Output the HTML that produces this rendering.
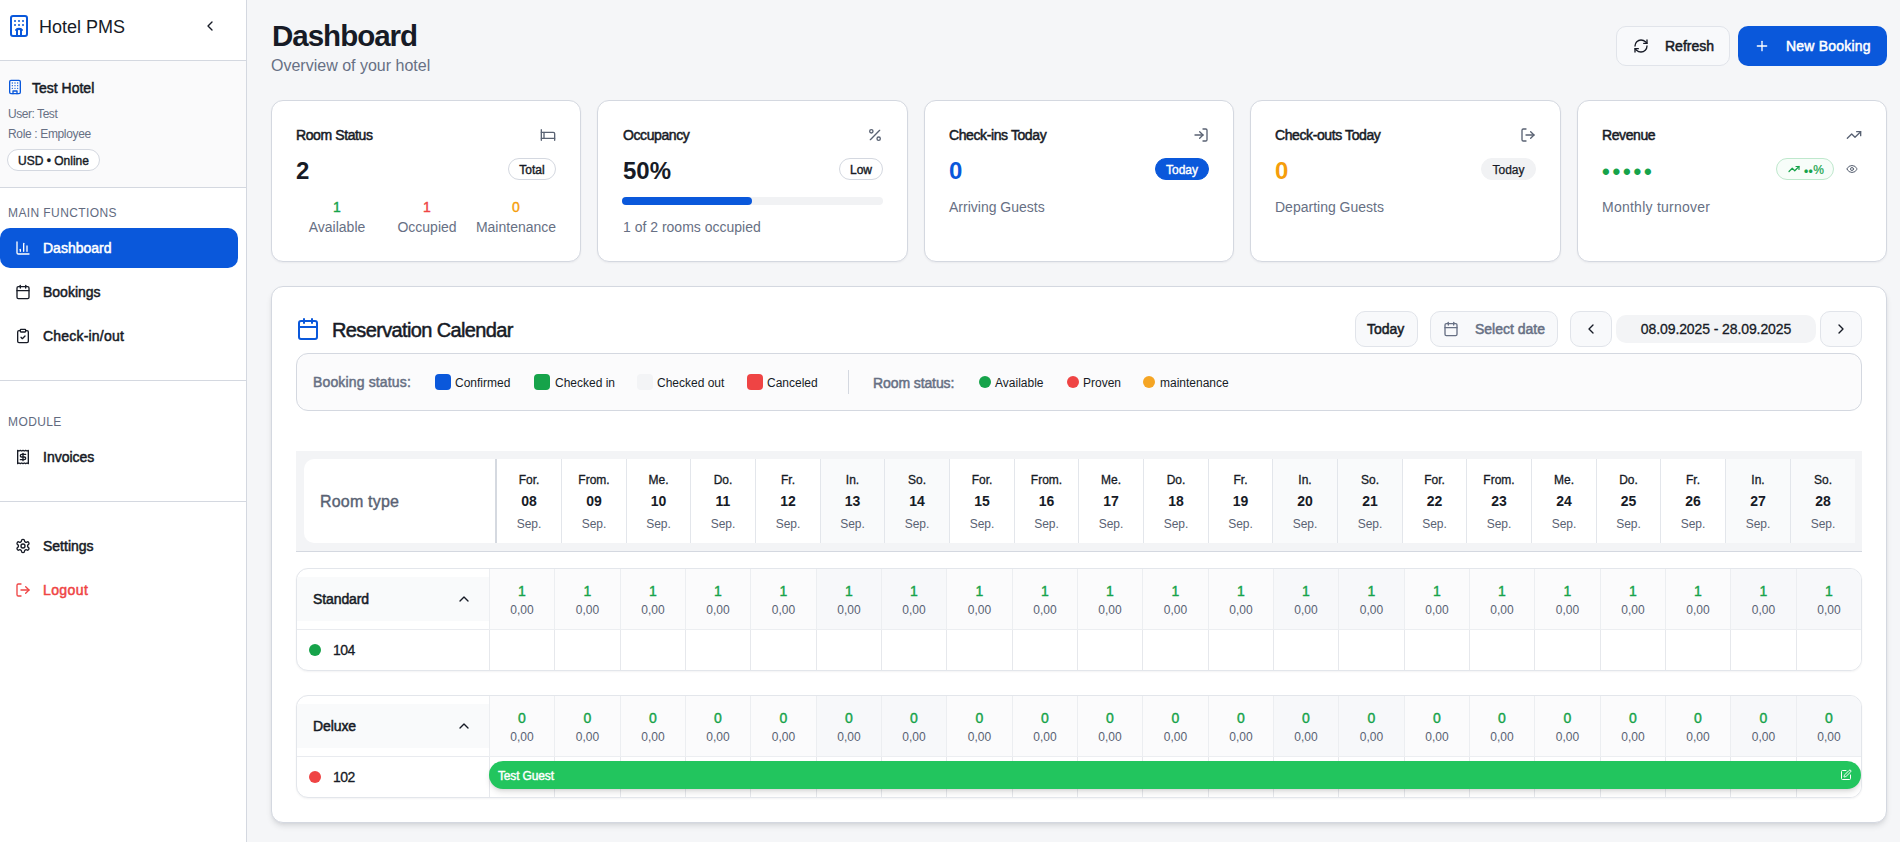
<!DOCTYPE html>
<html lang="en">
<head>
<meta charset="utf-8">
<title>Hotel PMS - Dashboard</title>
<style>
*{box-sizing:border-box;margin:0;padding:0}
html,body{width:1900px;height:842px;overflow:hidden}
body{font-family:"Liberation Sans",sans-serif;background:#f5f6f8;color:#171b26;position:relative;font-size:14px;line-height:1}
svg{display:block}
.abs{position:absolute}
.t{position:absolute;white-space:nowrap;line-height:1}
.ic{position:absolute;fill:none;stroke:currentColor;stroke-width:2;stroke-linecap:round;stroke-linejoin:round}
/* sidebar */
#sidebar{position:absolute;left:0;top:0;width:247px;height:842px;background:#fff;border-right:1px solid #d4d8e0}
#sb-head{position:absolute;left:0;top:0;width:246px;height:61px;border-bottom:1px solid #d4d8e0}
#sb-hotel{position:absolute;left:0;top:61px;width:246px;height:127px;background:#fafafb;border-bottom:1px solid #d4d8e0}
.sb-sep{position:absolute;left:0;width:246px;height:1px;background:#d4d8e0}
.sb-label{position:absolute;left:8px;font-size:12px;letter-spacing:.4px;color:#626b7f;white-space:nowrap}
.nav{position:absolute;left:0;width:238px;height:40px;border-radius:10px;color:#171b26}
.nav.active{background:#0a58db;color:#fff}
.nav .ic{left:15px;top:12px;width:16px;height:16px}
.nav span{position:absolute;left:43px;top:13px;font-size:14px;font-weight:400;-webkit-text-stroke:.5px currentColor;white-space:nowrap}
/* main */
.btn{position:absolute;height:40px;border-radius:10px;font-size:14px;font-weight:700}
.card{position:absolute;top:100px;height:162px;background:#fff;border:1px solid #d4d8e0;border-radius:12px;box-shadow:0 1px 2px rgba(16,24,40,.05)}
.card h3{position:absolute;left:24px;top:27px;font-size:14px;font-weight:400;-webkit-text-stroke:.5px currentColor;white-space:nowrap;letter-spacing:-.4px}
.card .big{position:absolute;left:24px;top:58px;font-size:24px;font-weight:700;white-space:nowrap}
.card .sub{position:absolute;left:24px;top:99px;font-size:14px;color:#677084;white-space:nowrap}
.card .ic{right:24px;top:26px;width:16px;height:16px;color:#596273}
.pill{position:absolute;height:22px;border-radius:11px;font-size:12px;font-weight:400;-webkit-text-stroke:.4px currentColor;line-height:20px;padding-top:1px;text-align:center;border:1px solid #d4d8e0;white-space:nowrap}
.muted{color:#677084}

/* calendar */
.sbw{font-weight:400;-webkit-text-stroke:.5px currentColor}
#cal{position:absolute;left:271px;top:286px;width:1616px;height:537px;background:#fff;border:1px solid #d4d8e0;border-radius:12px;box-shadow:0 4px 6px -1px rgba(16,24,40,.11),0 2px 4px -2px rgba(16,24,40,.10)}
.cbtn{position:absolute;top:311px;height:36px;border:1px solid #e1e4ea;border-radius:10px;background:#f8f9fb;font-size:14px}
#legend{position:absolute;left:296px;top:353px;width:1566px;height:58px;border:1px solid #d4d8e0;border-radius:12px;background:#fbfbfc}
.sw{position:absolute;top:374px;width:16px;height:16px;border-radius:4px}
.dot{position:absolute;width:12px;height:12px;border-radius:50%}
.lg{position:absolute;top:377px;font-size:12px;white-space:nowrap;color:#171b26}
#hstrip{position:absolute;left:296px;top:451px;width:1566px;height:101px;background:#f3f4f6;border-bottom:1px solid #d4d8e0}
.hc{position:absolute;top:459px;height:84px;background:#fff;border-right:1px solid #e3e6eb;text-align:center}
.hc.we{background:#f9fafb}
.hc b{position:absolute;left:0;right:0;white-space:nowrap}
.hc .d1{top:15px;font-size:12px;font-weight:400;-webkit-text-stroke:.3px currentColor}
.hc .d2{top:35px;font-size:14px;font-weight:700}
.hc .d3{top:59px;font-size:12px;font-weight:400;color:#596273}
.grp{position:absolute;left:296px;width:1566px;height:103px;border:1px solid #e3e6eb;border-radius:12px;background:#fff;overflow:hidden;box-shadow:0 1px 2px rgba(16,24,40,.05)}
.grp .lab{position:absolute;left:0;top:8px;width:192px;height:44px;background:#f9fafb}
.gc{position:absolute;top:0;height:61px;background:#fbfbfc;border-left:1px solid #eceef1;border-bottom:1px solid #eceef1;text-align:center}
.gc.we{background:#f7f8fa}
.gc b{position:absolute;left:0;right:0;top:15px;font-size:14px;font-weight:400;-webkit-text-stroke:.4px #16a34a;color:#16a34a}
.gc i{position:absolute;left:0;right:0;top:35px;font-size:12px;font-style:normal;color:#596273}
.rc{position:absolute;top:61px;height:40px;border-left:1px solid #e6e8ec;background:#fff}
.rl{position:absolute;left:0;top:60px;width:192px;height:41px;border-top:1px solid #e9ebef}
</style>
</head>
<body>

<!-- ============ SIDEBAR ============ -->
<aside id="sidebar">
  <div id="sb-head">
    <svg class="ic" style="left:7px;top:14px;width:24px;height:24px;color:#0a58db" viewBox="0 0 24 24"><rect x="4" y="2" width="16" height="20" rx="2"/><path d="M10 22v-6.57"/><path d="M14 15.43V22"/><path d="M15 16a5 5 0 0 0-6 0"/><path d="M8 7h.01M12 7h.01M16 7h.01M8 11h.01M12 11h.01M16 11h.01"/></svg>
    <div class="t" style="left:39px;top:18px;font-size:18px;">Hotel PMS</div>
    <svg class="ic" style="left:202px;top:18px;width:16px;height:16px;color:#171b26" viewBox="0 0 24 24"><path d="m15 18-6-6 6-6"/></svg>
  </div>
  <div id="sb-hotel">
    <svg class="ic" style="left:7px;top:18px;width:16px;height:16px;color:#0a58db" viewBox="0 0 24 24"><rect x="4" y="2" width="16" height="20" rx="2"/><path d="M9 22v-4h6v4"/><path d="M8 6h.01M16 6h.01M12 6h.01M12 10h.01M12 14h.01M16 10h.01M16 14h.01M8 10h.01M8 14h.01"/></svg>
    <div class="t sbw" style="left:32px;top:20px;font-size:14px">Test Hotel</div>
    <div class="t muted" style="left:8px;top:47px;font-size:12px;letter-spacing:-.45px">User: Test</div>
    <div class="t muted" style="left:8px;top:67px;font-size:12px;letter-spacing:-.35px">Role : Employee</div>
    <div class="pill" style="left:7px;top:88px;width:93px;color:#171b26;background:#fff">USD • Online</div>
  </div>

  <div class="sb-label" style="top:207px">MAIN FUNCTIONS</div>
  <div class="nav active" style="top:228px">
    <svg class="ic" viewBox="0 0 24 24"><path d="M3 3v16a2 2 0 0 0 2 2h16"/><path d="M18 17V9"/><path d="M13 17V5"/><path d="M8 17v-3"/></svg>
    <span>Dashboard</span>
  </div>
  <div class="nav" style="top:272px">
    <svg class="ic" viewBox="0 0 24 24"><path d="M8 2v4"/><path d="M16 2v4"/><rect width="18" height="18" x="3" y="4" rx="2"/><path d="M3 10h18"/></svg>
    <span>Bookings</span>
  </div>
  <div class="nav" style="top:316px">
    <svg class="ic" viewBox="0 0 24 24"><rect width="8" height="4" x="8" y="2" rx="1" ry="1"/><path d="M16 4h2a2 2 0 0 1 2 2v14a2 2 0 0 1-2 2H6a2 2 0 0 1-2-2V6a2 2 0 0 1 2-2h2"/><path d="m9 14 2 2 4-4"/></svg>
    <span style="letter-spacing:.2px">Check-in/out</span>
  </div>
  <div class="sb-sep" style="top:380px"></div>
  <div class="sb-label" style="top:416px">MODULE</div>
  <div class="nav" style="top:437px">
    <svg class="ic" viewBox="0 0 24 24"><path d="M4 2v20l2-1 2 1 2-1 2 1 2-1 2 1 2-1 2 1V2l-2 1-2-1-2 1-2-1-2 1-2-1-2 1Z"/><path d="M16 8h-6a2 2 0 1 0 0 4h4a2 2 0 1 1 0 4H8"/><path d="M12 17.5v-11"/></svg>
    <span>Invoices</span>
  </div>
  <div class="sb-sep" style="top:501px"></div>
  <div class="nav" style="top:526px">
    <svg class="ic" viewBox="0 0 24 24"><path d="M12.22 2h-.44a2 2 0 0 0-2 2v.18a2 2 0 0 1-1 1.73l-.43.25a2 2 0 0 1-2 0l-.15-.08a2 2 0 0 0-2.73.73l-.22.38a2 2 0 0 0 .73 2.73l.15.1a2 2 0 0 1 1 1.72v.51a2 2 0 0 1-1 1.74l-.15.09a2 2 0 0 0-.73 2.73l.22.38a2 2 0 0 0 2.73.73l.15-.08a2 2 0 0 1 2 0l.43.25a2 2 0 0 1 1 1.73V20a2 2 0 0 0 2 2h.44a2 2 0 0 0 2-2v-.18a2 2 0 0 1 1-1.73l.43-.25a2 2 0 0 1 2 0l.15.08a2 2 0 0 0 2.73-.73l.22-.39a2 2 0 0 0-.73-2.73l-.15-.08a2 2 0 0 1-1-1.74v-.5a2 2 0 0 1 1-1.74l.15-.09a2 2 0 0 0 .73-2.73l-.22-.38a2 2 0 0 0-2.73-.73l-.15.08a2 2 0 0 1-2 0l-.43-.25a2 2 0 0 1-1-1.73V4a2 2 0 0 0-2-2z"/><circle cx="12" cy="12" r="3"/></svg>
    <span>Settings</span>
  </div>
  <div class="nav" style="top:570px;color:#ef4444">
    <svg class="ic" viewBox="0 0 24 24"><path d="M9 21H5a2 2 0 0 1-2-2V5a2 2 0 0 1 2-2h4"/><path d="m16 17 5-5-5-5"/><path d="M21 12H9"/></svg>
    <span style="letter-spacing:.4px">Logout</span>
  </div>
</aside>

<!-- ============ MAIN ============ -->
<main id="main">
  <h1 class="t" style="left:272px;top:21px;font-size:29.5px;font-weight:700;letter-spacing:-1px">Dashboard</h1>
  <p class="t muted" style="left:271px;top:58px;font-size:16px">Overview of your hotel</p>

  <div class="btn" style="left:1616px;top:26px;width:114px;background:#f8f9fb;border:1px solid #e1e4ea;color:#171b26">
    <svg class="ic" style="left:16px;top:11px;width:16px;height:16px" viewBox="0 0 24 24"><path d="M3 12a9 9 0 0 1 9-9 9.75 9.75 0 0 1 6.74 2.74L21 8"/><path d="M21 3v5h-5"/><path d="M21 12a9 9 0 0 1-9 9 9.75 9.75 0 0 1-6.74-2.74L3 16"/><path d="M8 16H3v5"/></svg>
    <span class="t sbw" style="left:48px;top:12px">Refresh</span>
  </div>
  <div class="btn" style="left:1738px;top:26px;width:149px;background:#0a58db;color:#fff">
    <svg class="ic" style="left:16px;top:12px;width:16px;height:16px" viewBox="0 0 24 24"><path d="M5 12h14"/><path d="M12 5v14"/></svg>
    <span class="t sbw" style="left:48px;top:13px;letter-spacing:.2px">New Booking</span>
  </div>


  <section class="card" style="left:271px;width:310px">
    <h3>Room Status</h3>
    <svg class="ic" viewBox="0 0 24 24"><path d="M2 4v16"/><path d="M2 8h18a2 2 0 0 1 2 2v10"/><path d="M2 17h20"/><path d="M6 8v9"/></svg>
    <div class="big">2</div>
    <div class="pill" style="right:24px;top:57px;width:48px;color:#171b26">Total</div>
    <div class="t" style="left:25px;top:99px;width:80px;text-align:center;color:#16a34a;-webkit-text-stroke:.4px #16a34a">1</div>
    <div class="t muted" style="left:25px;top:119px;width:80px;text-align:center">Available</div>
    <div class="t" style="left:115px;top:99px;width:80px;text-align:center;color:#ef4444;-webkit-text-stroke:.4px #ef4444">1</div>
    <div class="t muted" style="left:115px;top:119px;width:80px;text-align:center">Occupied</div>
    <div class="t" style="left:194px;top:99px;width:100px;text-align:center;color:#f59e0b;-webkit-text-stroke:.4px #f59e0b">0</div>
    <div class="t muted" style="left:194px;top:119px;width:100px;text-align:center">Maintenance</div>
  </section>

  <section class="card" style="left:597px;width:311px">
    <h3 style="left:25px">Occupancy</h3>
    <svg class="ic" viewBox="0 0 24 24"><line x1="19" x2="5" y1="5" y2="19"/><circle cx="6.5" cy="6.5" r="2.5"/><circle cx="17.5" cy="17.5" r="2.5"/></svg>
    <div class="big" style="left:25px">50%</div>
    <div class="pill" style="right:24px;top:57px;width:44px;color:#171b26">Low</div>
    <div class="abs" style="left:24px;top:96px;width:261px;height:8px;border-radius:4px;background:#f1f2f4"><div style="width:130px;height:8px;border-radius:4px;background:#0a58db"></div></div>
    <div class="sub" style="top:119px;left:25px">1 of 2 rooms occupied</div>
  </section>

  <section class="card" style="left:924px;width:310px">
    <h3>Check-ins Today</h3>
    <svg class="ic" viewBox="0 0 24 24"><path d="M15 3h4a2 2 0 0 1 2 2v14a2 2 0 0 1-2 2h-4"/><path d="m10 17 5-5-5-5"/><path d="M15 12H3"/></svg>
    <div class="big" style="color:#0a58db">0</div>
    <div class="pill" style="right:24px;top:57px;width:54px;color:#fff;background:#0a58db;border-color:#0a58db">Today</div>
    <div class="sub">Arriving Guests</div>
  </section>

  <section class="card" style="left:1250px;width:311px">
    <h3>Check-outs Today</h3>
    <svg class="ic" viewBox="0 0 24 24"><path d="M9 21H5a2 2 0 0 1-2-2V5a2 2 0 0 1 2-2h4"/><path d="m16 17 5-5-5-5"/><path d="M21 12H9"/></svg>
    <div class="big" style="color:#f59e0b">0</div>
    <div class="pill" style="right:24px;top:57px;width:55px;color:#171b26;background:#f1f2f4;border-color:#f1f2f4;-webkit-text-stroke:.25px">Today</div>
    <div class="sub">Departing Guests</div>
  </section>

  <section class="card" style="left:1577px;width:310px">
    <h3>Revenue</h3>
    <svg class="ic" viewBox="0 0 24 24"><path d="M16 7h6v6"/><path d="m22 7-8.5 8.5-5-5L2 17"/></svg>
    <div class="big" style="color:#16a34a;top:60px;font-size:22px;letter-spacing:2.8px">•••••</div>
    <div class="pill" style="left:198px;top:57px;width:58px;color:#16a34a;border-color:#bfe8cd;background:#f7fdf9;text-align:left">
      <svg class="ic" style="left:11px;top:4px;right:auto;width:12px;height:12px;color:#16a34a;stroke-width:2.4" viewBox="0 0 24 24"><path d="M16 7h6v6"/><path d="m22 7-8.5 8.5-5-5L2 17"/></svg>
      <span class="t" style="left:27px;top:4.5px;-webkit-text-stroke:.2px #16a34a;letter-spacing:.4px"><span style="position:relative;top:2px">••</span>%</span>
    </div>
    <svg class="ic" style="left:268px;top:62px;right:auto;width:12px;height:12px" viewBox="0 0 24 24"><path d="M2.062 12.348a1 1 0 0 1 0-.696 10.75 10.75 0 0 1 19.876 0 1 1 0 0 1 0 .696 10.75 10.75 0 0 1-19.876 0"/><circle cx="12" cy="12" r="3"/></svg>
    <div class="sub" style="letter-spacing:.25px">Monthly turnover</div>
  </section>



  <section id="cal"></section>
  <svg class="ic" style="left:296px;top:317px;width:24px;height:24px;color:#0a58db" viewBox="0 0 24 24"><path d="M8 2v4"/><path d="M16 2v4"/><rect width="18" height="18" x="3" y="4" rx="2"/><path d="M3 10h18"/></svg>
  <h2 class="t sbw" style="left:332px;top:320px;font-size:20px;letter-spacing:-.63px">Reservation Calendar</h2>

  <div class="cbtn" style="left:1355px;width:63px"><span class="t sbw" style="left:11px;top:10px">Today</span></div>
  <div class="cbtn" style="left:1430px;width:128px;color:#677084">
    <svg class="ic" style="left:12px;top:9px;width:16px;height:16px" viewBox="0 0 24 24"><path d="M8 2v4"/><path d="M16 2v4"/><rect width="18" height="18" x="3" y="4" rx="2"/><path d="M3 10h18"/></svg>
    <span class="t sbw" style="left:44px;top:10px">Select date</span></div>
  <div class="cbtn" style="left:1570px;width:42px"><svg class="ic" style="left:12px;top:9px;width:16px;height:16px" viewBox="0 0 24 24"><path d="m15 18-6-6 6-6"/></svg></div>
  <div class="abs" style="left:1616px;top:315px;width:200px;height:28px;border-radius:10px;background:#f3f4f6"><span class="t" style="left:0;right:0;top:7px;text-align:center;font-size:14px;-webkit-text-stroke:.3px currentColor;letter-spacing:-.1px">08.09.2025 - 28.09.2025</span></div>
  <div class="cbtn" style="left:1820px;width:42px"><svg class="ic" style="left:12px;top:9px;width:16px;height:16px" viewBox="0 0 24 24"><path d="m9 18 6-6-6-6"/></svg></div>

  <div id="legend"></div>
  <span class="t sbw" style="left:313px;top:375px;font-size:14px;color:#677084;letter-spacing:.15px">Booking status:</span>
  <span class="sw" style="left:435px;background:#0a58db"></span><span class="lg" style="left:455px">Confirmed</span>
  <span class="sw" style="left:534px;background:#16a34a"></span><span class="lg" style="left:555px">Checked in</span>
  <span class="sw" style="left:637px;background:#f3f4f6"></span><span class="lg" style="left:657px">Checked out</span>
  <span class="sw" style="left:747px;background:#ef4444"></span><span class="lg" style="left:767px">Canceled</span>
  <div class="abs" style="left:848px;top:370px;width:1px;height:24px;background:#d4d8e0"></div>
  <span class="t sbw" style="left:873px;top:376px;font-size:14px;color:#677084;letter-spacing:-.1px">Room status:</span>
  <span class="dot" style="left:979px;top:376px;background:#16a34a"></span><span class="lg" style="left:995px">Available</span>
  <span class="dot" style="left:1067px;top:376px;background:#ef4444"></span><span class="lg" style="left:1083px">Proven</span>
  <span class="dot" style="left:1143px;top:376px;background:#f5a524"></span><span class="lg" style="left:1160px">maintenance</span>

  <div id="hstrip"></div>
  <div class="abs" style="left:304px;top:459px;width:193px;height:84px;background:#fff;border-radius:10px 0 0 10px;border-right:2px solid #d5d9e0"><span class="t" style="left:16px;top:35px;font-size:16px;color:#596273;-webkit-text-stroke:.4px #596273;letter-spacing:.2px">Room type</span></div>
  <div class="hc" style="left:497px;width:65px"><b class="d1">For.</b><b class="d2">08</b><b class="d3">Sep.</b></div>
  <div class="hc" style="left:562px;width:65px"><b class="d1">From.</b><b class="d2">09</b><b class="d3">Sep.</b></div>
  <div class="hc" style="left:627px;width:64px"><b class="d1">Me.</b><b class="d2">10</b><b class="d3">Sep.</b></div>
  <div class="hc" style="left:691px;width:65px"><b class="d1">Do.</b><b class="d2">11</b><b class="d3">Sep.</b></div>
  <div class="hc" style="left:756px;width:65px"><b class="d1">Fr.</b><b class="d2">12</b><b class="d3">Sep.</b></div>
  <div class="hc we" style="left:821px;width:64px"><b class="d1">In.</b><b class="d2">13</b><b class="d3">Sep.</b></div>
  <div class="hc we" style="left:885px;width:65px"><b class="d1">So.</b><b class="d2">14</b><b class="d3">Sep.</b></div>
  <div class="hc" style="left:950px;width:65px"><b class="d1">For.</b><b class="d2">15</b><b class="d3">Sep.</b></div>
  <div class="hc" style="left:1015px;width:64px"><b class="d1">From.</b><b class="d2">16</b><b class="d3">Sep.</b></div>
  <div class="hc" style="left:1079px;width:65px"><b class="d1">Me.</b><b class="d2">17</b><b class="d3">Sep.</b></div>
  <div class="hc" style="left:1144px;width:65px"><b class="d1">Do.</b><b class="d2">18</b><b class="d3">Sep.</b></div>
  <div class="hc" style="left:1209px;width:64px"><b class="d1">Fr.</b><b class="d2">19</b><b class="d3">Sep.</b></div>
  <div class="hc we" style="left:1273px;width:65px"><b class="d1">In.</b><b class="d2">20</b><b class="d3">Sep.</b></div>
  <div class="hc we" style="left:1338px;width:65px"><b class="d1">So.</b><b class="d2">21</b><b class="d3">Sep.</b></div>
  <div class="hc" style="left:1403px;width:64px"><b class="d1">For.</b><b class="d2">22</b><b class="d3">Sep.</b></div>
  <div class="hc" style="left:1467px;width:65px"><b class="d1">From.</b><b class="d2">23</b><b class="d3">Sep.</b></div>
  <div class="hc" style="left:1532px;width:65px"><b class="d1">Me.</b><b class="d2">24</b><b class="d3">Sep.</b></div>
  <div class="hc" style="left:1597px;width:64px"><b class="d1">Do.</b><b class="d2">25</b><b class="d3">Sep.</b></div>
  <div class="hc" style="left:1661px;width:65px"><b class="d1">Fr.</b><b class="d2">26</b><b class="d3">Sep.</b></div>
  <div class="hc we" style="left:1726px;width:65px"><b class="d1">In.</b><b class="d2">27</b><b class="d3">Sep.</b></div>
  <div class="hc we" style="left:1791px;width:64px;border-right:0"><b class="d1">So.</b><b class="d2">28</b><b class="d3">Sep.</b></div>

  <div class="grp" style="top:568px">
    <div class="lab"></div><span class="t sbw" style="left:16px;top:23px;font-size:14px;letter-spacing:-.1px">Standard</span>
    <svg class="ic" style="left:159px;top:22px;width:16px;height:16px" viewBox="0 0 24 24"><path d="m18 15-6-6-6 6"/></svg>
    <div class="rl"><span class="dot" style="left:12px;top:14px;background:#16a34a"></span><span class="t" style="left:36px;top:13px;font-size:14px;letter-spacing:-.5px;-webkit-text-stroke:.3px currentColor">104</span></div>
    <div class="gc" style="left:192px;width:65px"><b>1</b><i>0,00</i></div><div class="rc" style="left:192px;width:65px"></div>
    <div class="gc" style="left:257px;width:66px"><b>1</b><i>0,00</i></div><div class="rc" style="left:257px;width:66px"></div>
    <div class="gc" style="left:323px;width:65px"><b>1</b><i>0,00</i></div><div class="rc" style="left:323px;width:65px"></div>
    <div class="gc" style="left:388px;width:65px"><b>1</b><i>0,00</i></div><div class="rc" style="left:388px;width:65px"></div>
    <div class="gc" style="left:453px;width:66px"><b>1</b><i>0,00</i></div><div class="rc" style="left:453px;width:66px"></div>
    <div class="gc we" style="left:519px;width:65px"><b>1</b><i>0,00</i></div><div class="rc" style="left:519px;width:65px"></div>
    <div class="gc we" style="left:584px;width:65px"><b>1</b><i>0,00</i></div><div class="rc" style="left:584px;width:65px"></div>
    <div class="gc" style="left:649px;width:66px"><b>1</b><i>0,00</i></div><div class="rc" style="left:649px;width:66px"></div>
    <div class="gc" style="left:715px;width:65px"><b>1</b><i>0,00</i></div><div class="rc" style="left:715px;width:65px"></div>
    <div class="gc" style="left:780px;width:65px"><b>1</b><i>0,00</i></div><div class="rc" style="left:780px;width:65px"></div>
    <div class="gc" style="left:845px;width:66px"><b>1</b><i>0,00</i></div><div class="rc" style="left:845px;width:66px"></div>
    <div class="gc" style="left:911px;width:65px"><b>1</b><i>0,00</i></div><div class="rc" style="left:911px;width:65px"></div>
    <div class="gc we" style="left:976px;width:65px"><b>1</b><i>0,00</i></div><div class="rc" style="left:976px;width:65px"></div>
    <div class="gc we" style="left:1041px;width:66px"><b>1</b><i>0,00</i></div><div class="rc" style="left:1041px;width:66px"></div>
    <div class="gc" style="left:1107px;width:65px"><b>1</b><i>0,00</i></div><div class="rc" style="left:1107px;width:65px"></div>
    <div class="gc" style="left:1172px;width:65px"><b>1</b><i>0,00</i></div><div class="rc" style="left:1172px;width:65px"></div>
    <div class="gc" style="left:1237px;width:66px"><b>1</b><i>0,00</i></div><div class="rc" style="left:1237px;width:66px"></div>
    <div class="gc" style="left:1303px;width:65px"><b>1</b><i>0,00</i></div><div class="rc" style="left:1303px;width:65px"></div>
    <div class="gc" style="left:1368px;width:65px"><b>1</b><i>0,00</i></div><div class="rc" style="left:1368px;width:65px"></div>
    <div class="gc we" style="left:1433px;width:66px"><b>1</b><i>0,00</i></div><div class="rc" style="left:1433px;width:66px"></div>
    <div class="gc we" style="left:1499px;width:65px"><b>1</b><i>0,00</i></div><div class="rc" style="left:1499px;width:65px"></div>
  </div>
  <div class="grp" style="top:695px">
    <div class="lab"></div><span class="t sbw" style="left:16px;top:23px;font-size:14px;letter-spacing:-.1px">Deluxe</span>
    <svg class="ic" style="left:159px;top:22px;width:16px;height:16px" viewBox="0 0 24 24"><path d="m18 15-6-6-6 6"/></svg>
    <div class="rl"><span class="dot" style="left:12px;top:14px;background:#ef4444"></span><span class="t" style="left:36px;top:13px;font-size:14px;letter-spacing:-.5px;-webkit-text-stroke:.3px currentColor">102</span></div>
    <div class="gc" style="left:192px;width:65px"><b>0</b><i>0,00</i></div><div class="rc" style="left:192px;width:65px"></div>
    <div class="gc" style="left:257px;width:66px"><b>0</b><i>0,00</i></div><div class="rc" style="left:257px;width:66px"></div>
    <div class="gc" style="left:323px;width:65px"><b>0</b><i>0,00</i></div><div class="rc" style="left:323px;width:65px"></div>
    <div class="gc" style="left:388px;width:65px"><b>0</b><i>0,00</i></div><div class="rc" style="left:388px;width:65px"></div>
    <div class="gc" style="left:453px;width:66px"><b>0</b><i>0,00</i></div><div class="rc" style="left:453px;width:66px"></div>
    <div class="gc we" style="left:519px;width:65px"><b>0</b><i>0,00</i></div><div class="rc" style="left:519px;width:65px"></div>
    <div class="gc we" style="left:584px;width:65px"><b>0</b><i>0,00</i></div><div class="rc" style="left:584px;width:65px"></div>
    <div class="gc" style="left:649px;width:66px"><b>0</b><i>0,00</i></div><div class="rc" style="left:649px;width:66px"></div>
    <div class="gc" style="left:715px;width:65px"><b>0</b><i>0,00</i></div><div class="rc" style="left:715px;width:65px"></div>
    <div class="gc" style="left:780px;width:65px"><b>0</b><i>0,00</i></div><div class="rc" style="left:780px;width:65px"></div>
    <div class="gc" style="left:845px;width:66px"><b>0</b><i>0,00</i></div><div class="rc" style="left:845px;width:66px"></div>
    <div class="gc" style="left:911px;width:65px"><b>0</b><i>0,00</i></div><div class="rc" style="left:911px;width:65px"></div>
    <div class="gc we" style="left:976px;width:65px"><b>0</b><i>0,00</i></div><div class="rc" style="left:976px;width:65px"></div>
    <div class="gc we" style="left:1041px;width:66px"><b>0</b><i>0,00</i></div><div class="rc" style="left:1041px;width:66px"></div>
    <div class="gc" style="left:1107px;width:65px"><b>0</b><i>0,00</i></div><div class="rc" style="left:1107px;width:65px"></div>
    <div class="gc" style="left:1172px;width:65px"><b>0</b><i>0,00</i></div><div class="rc" style="left:1172px;width:65px"></div>
    <div class="gc" style="left:1237px;width:66px"><b>0</b><i>0,00</i></div><div class="rc" style="left:1237px;width:66px"></div>
    <div class="gc" style="left:1303px;width:65px"><b>0</b><i>0,00</i></div><div class="rc" style="left:1303px;width:65px"></div>
    <div class="gc" style="left:1368px;width:65px"><b>0</b><i>0,00</i></div><div class="rc" style="left:1368px;width:65px"></div>
    <div class="gc we" style="left:1433px;width:66px"><b>0</b><i>0,00</i></div><div class="rc" style="left:1433px;width:66px"></div>
    <div class="gc we" style="left:1499px;width:65px"><b>0</b><i>0,00</i></div><div class="rc" style="left:1499px;width:65px"></div>
    <div class="abs" style="left:192px;top:65px;width:1372px;height:28px;border-radius:14px;background:#22c55e;color:#fff;box-shadow:0 4px 6px -1px rgba(0,0,0,.12),0 2px 4px -2px rgba(0,0,0,.12)"><span class="t" style="left:9px;top:9px;font-size:12px;-webkit-text-stroke:.4px #fff;letter-spacing:-.15px">Test Guest</span><svg class="ic" style="left:1351px;top:8px;width:12px;height:12px" viewBox="0 0 24 24"><path d="M12 3H5a2 2 0 0 0-2 2v14a2 2 0 0 0 2 2h14a2 2 0 0 0 2-2v-7"/><path d="M18.375 2.625a1 1 0 0 1 3 3l-9.013 9.014a2 2 0 0 1-.853.505l-2.873.84a.5.5 0 0 1-.62-.62l.84-2.873a2 2 0 0 1 .506-.852z"/></svg></div>
  </div>
</main>
</body>
</html>
